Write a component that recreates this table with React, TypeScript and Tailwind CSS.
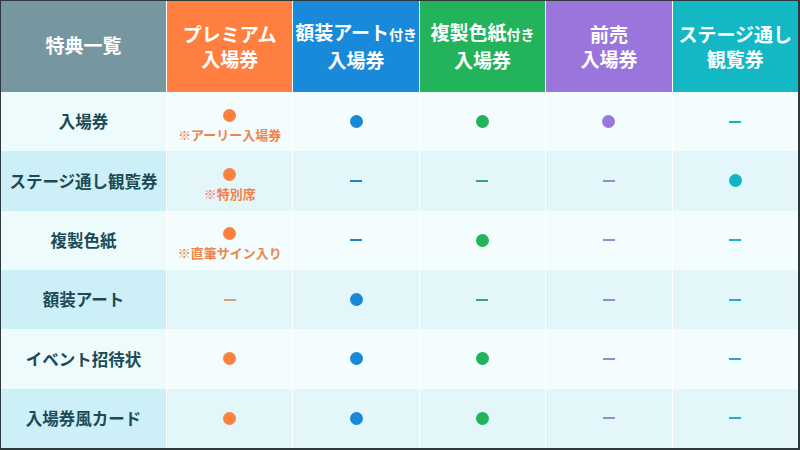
const FONT = { fontFamily: '"Noto Sans CJK JP", "Noto Sans", sans-serif' }

type Mark = 'dot' | 'dash'

interface Col {
  key: string
  bg: string
  dot: string
  dash: string
  note: string
}

const COLS: Col[] = [
  { key: 'premium', bg: 'bg-[#fe7f3f]', dot: 'bg-[#f9823f]', dash: 'bg-[#dc9c72]', note: 'text-[#f0834a]' },
  { key: 'art',     bg: 'bg-[#188ad9]', dot: 'bg-[#1888d8]', dash: 'bg-[#1a86c8]', note: '' },
  { key: 'shikishi',bg: 'bg-[#23b35b]', dot: 'bg-[#21b45a]', dash: 'bg-[#39a56c]', note: '' },
  { key: 'presale', bg: 'bg-[#9a76dc]', dot: 'bg-[#9878da]', dash: 'bg-[#9a8ac8]', note: '' },
  { key: 'stage',   bg: 'bg-[#13b8c4]', dot: 'bg-[#12b5c2]', dash: 'bg-[#1fafbd]', note: '' },
]

const ROWS: { label: string; marks: Mark[]; note?: string }[] = [
  { label: '入場券',           marks: ['dot', 'dot', 'dot', 'dot', 'dash'],   note: '※アーリー入場券' },
  { label: 'ステージ通し観覧券', marks: ['dot', 'dash', 'dash', 'dash', 'dot'], note: '※特別席' },
  { label: '複製色紙',         marks: ['dot', 'dash', 'dot', 'dash', 'dash'],  note: '※直筆サイン入り' },
  { label: '額装アート',       marks: ['dash', 'dot', 'dash', 'dash', 'dash'] },
  { label: 'イベント招待状',   marks: ['dot', 'dot', 'dot', 'dash', 'dash'] },
  { label: '入場券風カード',   marks: ['dot', 'dot', 'dot', 'dash', 'dash'] },
]

function HeadCell({ bg, children }: { bg: string; children: React.ReactNode }) {
  return (
    <div className={`${bg} flex flex-col items-center justify-center text-white font-bold text-[19px] leading-[25px] text-center pb-[2px]`}>
      {children}
    </div>
  )
}

export default function App() {
  return (
    <div className="w-[800px] h-[450px] bg-[#2d393d] pt-px pl-px pr-[2px] pb-[2px]" style={FONT}>
      <div className="w-full h-full grid grid-cols-[165px_repeat(5,1fr)] grid-rows-[91px_repeat(6,1fr)] gap-x-px bg-white">
        {/* header */}
        <div className="bg-[#7797a0] flex items-center justify-center text-white font-bold text-[19px] pb-[2px]">特典一覧</div>
        <HeadCell bg={COLS[0].bg}><span>プレミアム</span><span>入場券</span></HeadCell>
        <HeadCell bg={COLS[1].bg}><span className="whitespace-nowrap">額装アート<span className="text-[14px]">付き</span></span><span>入場券</span></HeadCell>
        <HeadCell bg={COLS[2].bg}><span className="whitespace-nowrap">複製色紙<span className="text-[14px]">付き</span></span><span>入場券</span></HeadCell>
        <HeadCell bg={COLS[3].bg}><span>前売</span><span>入場券</span></HeadCell>
        <HeadCell bg={COLS[4].bg}><span className="whitespace-nowrap">ステージ通し</span><span>観覧券</span></HeadCell>

        {/* body */}
        {ROWS.map((r, ri) => {
          const even = ri % 2 === 1
          return [
            <div key={`l${ri}`} className={`${even ? 'bg-[#cdeff8]' : 'bg-[#edfbfd]'} flex items-center justify-center text-[16.5px] font-bold text-[#1c4a55] whitespace-nowrap`}>
              {r.label}
            </div>,
            ...r.marks.map((m, ci) => {
              const c = COLS[ci]
              const note = ci === 0 ? r.note : undefined
              return (
                <div key={`c${ri}-${ci}`} className={`${even ? 'bg-[#e3f6fa]' : 'bg-[#f3fdfe]'} flex flex-col items-center justify-center`}>
                  {m === 'dot'
                    ? <span className={`block w-[13px] h-[13px] rounded-full ${c.dot} ${note ? 'mt-[6px]' : ''}`} />
                    : <span className={`block w-[12px] h-[2px] ${c.dash}`} />}
                  {note && <span className={`text-[13px] font-bold leading-none mt-[6px] ${c.note}`}>{note}</span>}
                </div>
              )
            }),
          ]
        })}
      </div>
    </div>
  )
}
